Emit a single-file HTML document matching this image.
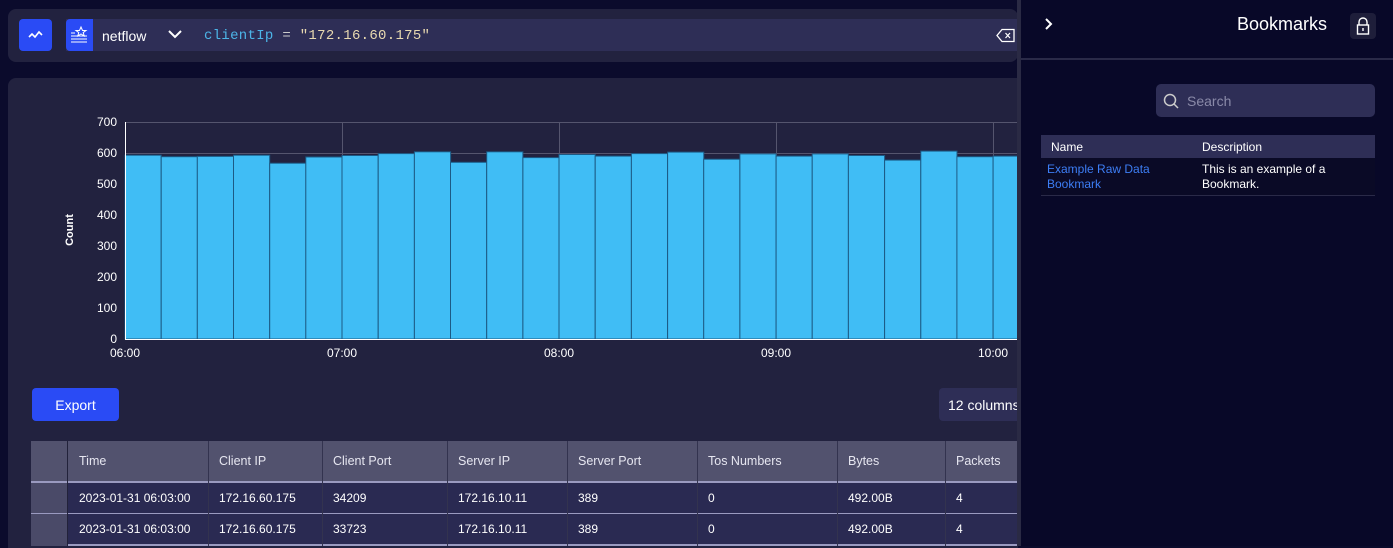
<!DOCTYPE html>
<html><head><meta charset="utf-8"><style>
*{margin:0;padding:0;box-sizing:border-box}
body{width:1393px;height:546px;background:#0b0b2c;font-family:"Liberation Sans",sans-serif;color:#fff;position:relative;overflow:hidden}
.abs{position:absolute}
.th,.td{position:absolute;font-size:12px;display:flex;align-items:center;padding-left:11px}
.th{color:#e6e6f0;font-size:12.5px}
</style></head><body>
<!-- top bar -->
<div class="abs" style="left:8px;top:9px;width:1010px;height:53px;background:#22223f;border-radius:8px"></div>
<div class="abs" style="left:19px;top:19px;width:33px;height:32px;background:#2a4bf5;border-radius:4px">
<svg width="33" height="32"><polyline points="10,18 13,15 16,18 20,13 23,16" fill="none" stroke="#fff" stroke-width="1.6"/></svg></div>
<div class="abs" style="left:66px;top:19px;width:952px;height:32px;background:#2e2e56"></div>
<div class="abs" style="left:66px;top:19px;width:27px;height:32px;background:#2a4bf5;border-radius:4px 0 0 4px">
<svg width="27" height="32"><polygon points="15,8 16.5,11.5 20,11.5 17.2,13.6 18.3,17 15,15 11.7,17 12.8,13.6 10,11.5 13.5,11.5" fill="none" stroke="#fff" stroke-width="1"/><line x1="5" y1="14" x2="9" y2="14" stroke="#fff"/><line x1="5" y1="17" x2="21" y2="17" stroke="#fff"/><line x1="5" y1="20" x2="21" y2="20" stroke="#fff"/><line x1="5" y1="23" x2="21" y2="23" stroke="#fff"/></svg></div>
<div class="abs" style="left:102px;top:28px;font-size:14px">netflow</div>
<svg class="abs" style="left:166px;top:28px" width="18" height="14"><polyline points="3,3 9,9 15,3" fill="none" stroke="#fff" stroke-width="2"/></svg>
<div class="abs" style="left:204px;top:28px;font-size:14px;font-family:'Liberation Mono',monospace;letter-spacing:0.3px"><span style="color:#4cb5e8">clientIp</span> <span style="color:#ccc">=</span> <span style="color:#e8d9b0">"172.16.60.175"</span></div>
<svg class="abs" style="left:996px;top:28px" width="20" height="15"><path d="M6 1.5 H18 V13.5 H6 L1 7.5 Z" fill="none" stroke="#fff" stroke-width="1.3"/><path d="M9.5 5 L14 10 M14 5 L9.5 10" stroke="#fff" stroke-width="1.2"/></svg>
<!-- chart panel -->
<div class="abs" style="left:8px;top:78px;width:1010px;height:470px;background:#22223f;border-radius:8px 0 0 0"></div>
<svg class="abs" style="left:0;top:0" width="1020" height="370" font-family="Liberation Sans, sans-serif">
<g stroke="#55556e" stroke-width="1">
<line x1="125" y1="122.5" x2="1020" y2="122.5"/><line x1="125" y1="153.5" x2="1020" y2="153.5"/>
<line x1="342.5" y1="122" x2="342.5" y2="339"/><line x1="559.5" y1="122" x2="559.5" y2="339"/><line x1="776.5" y1="122" x2="776.5" y2="339"/><line x1="993.5" y1="122" x2="993.5" y2="339"/>
</g>
<g fill="#40bdf5" stroke="#1c5a85" stroke-width="1">
<rect x="125" y="155.2" width="36.2" height="183.8"/><rect x="161.2" y="156.7" width="36.2" height="182.3"/><rect x="197.3" y="156.4" width="36.2" height="182.6"/><rect x="233.5" y="155.2" width="36.2" height="183.8"/><rect x="269.7" y="163.2" width="36.2" height="175.8"/><rect x="305.8" y="157" width="36.2" height="182"/><rect x="342" y="155.5" width="36.2" height="183.5"/><rect x="378.2" y="153.6" width="36.2" height="185.4"/><rect x="414.4" y="151.8" width="36.2" height="187.2"/><rect x="450.5" y="162.3" width="36.2" height="176.7"/><rect x="486.7" y="151.8" width="36.2" height="187.2"/><rect x="522.9" y="157.6" width="36.2" height="181.4"/><rect x="559" y="154.5" width="36.2" height="184.5"/><rect x="595.2" y="156.1" width="36.2" height="182.9"/><rect x="631.4" y="153.6" width="36.2" height="185.4"/><rect x="667.6" y="152.1" width="36.2" height="186.9"/><rect x="703.7" y="159.2" width="36.2" height="179.8"/><rect x="739.9" y="153.9" width="36.2" height="185.1"/><rect x="776.1" y="156.1" width="36.2" height="182.9"/><rect x="812.2" y="153.9" width="36.2" height="185.1"/><rect x="848.4" y="155.5" width="36.2" height="183.5"/><rect x="884.6" y="160.1" width="36.2" height="178.9"/><rect x="920.8" y="151.1" width="36.2" height="187.9"/><rect x="956.9" y="156.7" width="36.2" height="182.3"/><rect x="993.1" y="156.1" width="36.2" height="182.9"/>
</g>
<line x1="125.5" y1="122" x2="125.5" y2="339" stroke="#fff"/>
<line x1="125" y1="339.5" x2="1020" y2="339.5" stroke="#fff"/>
<g fill="#fff" font-size="12" text-anchor="end">
<text x="117" y="126">700</text><text x="117" y="157">600</text><text x="117" y="188">500</text><text x="117" y="219">400</text><text x="117" y="250">300</text><text x="117" y="281">200</text><text x="117" y="312">100</text><text x="117" y="343">0</text></g>
<g fill="#fff" font-size="12" text-anchor="middle">
<text x="125" y="357">06:00</text><text x="342" y="357">07:00</text><text x="559" y="357">08:00</text><text x="776" y="357">09:00</text><text x="993" y="357">10:00</text></g>
<text x="73" y="230" fill="#fff" font-size="11" font-weight="bold" text-anchor="middle" transform="rotate(-90 73 230)">Count</text>
</svg>
<div class="abs" style="left:32px;top:388px;width:87px;height:33px;background:#2a4bf5;border-radius:4px;font-size:14px;display:flex;align-items:center;justify-content:center">Export</div>
<div class="abs" style="left:939px;top:388px;width:90px;height:33px;background:#2e2e56;border-radius:4px;font-size:14px;padding:9px 0 0 9px">12 columns</div>
<!-- table -->
<div class="abs" style="left:31px;top:441px;width:989px;height:40px;background:#52526e"></div>
<div class="abs" style="left:31px;top:481px;width:989px;height:2px;background:#9a9ac0"></div>
<div class="abs" style="left:31px;top:483px;width:989px;height:30px;background:#2a2a52"></div>
<div class="abs" style="left:31px;top:513px;width:989px;height:1px;background:#9a9ac0"></div>
<div class="abs" style="left:31px;top:514px;width:989px;height:30px;background:#2a2a52"></div>
<div class="abs" style="left:31px;top:544px;width:989px;height:2px;background:#9a9ac0"></div>
<div class="abs" style="left:31px;top:483px;width:37px;height:63px;background:#4a4a68"></div>
<div class="abs" style="left:31px;top:513px;width:37px;height:1px;background:#9a9ac0"></div>
<div class="abs" style="left:67px;top:441px;width:1px;height:105px;background:#22223a"></div>
<div class="abs" style="left:208px;top:441px;width:1px;height:105px;background:#33334f"></div>
<div class="abs" style="left:322px;top:441px;width:1px;height:105px;background:#33334f"></div>
<div class="abs" style="left:447px;top:441px;width:1px;height:105px;background:#33334f"></div>
<div class="abs" style="left:567px;top:441px;width:1px;height:105px;background:#33334f"></div>
<div class="abs" style="left:697px;top:441px;width:1px;height:105px;background:#33334f"></div>
<div class="abs" style="left:837px;top:441px;width:1px;height:105px;background:#33334f"></div>
<div class="abs" style="left:945px;top:441px;width:1px;height:105px;background:#33334f"></div>
<div class="th" style="left:68px;top:441px;height:40px">Time</div>
<div class="th" style="left:208px;top:441px;height:40px">Client IP</div>
<div class="th" style="left:322px;top:441px;height:40px">Client Port</div>
<div class="th" style="left:447px;top:441px;height:40px">Server IP</div>
<div class="th" style="left:567px;top:441px;height:40px">Server Port</div>
<div class="th" style="left:697px;top:441px;height:40px">Tos Numbers</div>
<div class="th" style="left:837px;top:441px;height:40px">Bytes</div>
<div class="th" style="left:945px;top:441px;height:40px">Packets</div>
<div class="td" style="left:68px;top:483px;height:30px">2023-01-31 06:03:00</div>
<div class="td" style="left:208px;top:483px;height:30px">172.16.60.175</div>
<div class="td" style="left:322px;top:483px;height:30px">34209</div>
<div class="td" style="left:447px;top:483px;height:30px">172.16.10.11</div>
<div class="td" style="left:567px;top:483px;height:30px">389</div>
<div class="td" style="left:697px;top:483px;height:30px">0</div>
<div class="td" style="left:837px;top:483px;height:30px">492.00B</div>
<div class="td" style="left:945px;top:483px;height:30px">4</div>
<div class="td" style="left:68px;top:514px;height:30px">2023-01-31 06:03:00</div>
<div class="td" style="left:208px;top:514px;height:30px">172.16.60.175</div>
<div class="td" style="left:322px;top:514px;height:30px">33723</div>
<div class="td" style="left:447px;top:514px;height:30px">172.16.10.11</div>
<div class="td" style="left:567px;top:514px;height:30px">389</div>
<div class="td" style="left:697px;top:514px;height:30px">0</div>
<div class="td" style="left:837px;top:514px;height:30px">492.00B</div>
<div class="td" style="left:945px;top:514px;height:30px">4</div>
<!-- right panel -->
<div class="abs" style="left:1017px;top:0;width:4px;height:546px;background:#2a2a44"></div>
<div class="abs" style="left:1021px;top:0;width:372px;height:546px;background:#080828"></div>
<svg class="abs" style="left:1043px;top:17px" width="12" height="14"><polyline points="3,2 8,7 3,12" fill="none" stroke="#fff" stroke-width="2"/></svg>
<div class="abs" style="left:1237px;top:14px;font-size:18px">Bookmarks</div>
<div class="abs" style="left:1350px;top:13px;width:26px;height:26px;background:#1e1e3a;border-radius:4px">
<svg width="26" height="26"><path d="M9 12 V9 a4 4 0 0 1 8 0 V12" fill="none" stroke="#fff" stroke-width="1.4"/><rect x="7.5" y="12" width="11" height="9" fill="none" stroke="#fff" stroke-width="1.4"/><line x1="13" y1="15" x2="13" y2="18" stroke="#fff" stroke-width="1.4"/></svg></div>
<div class="abs" style="left:1021px;top:58px;width:372px;height:2px;background:#2a2a48"></div>
<div class="abs" style="left:1156px;top:84px;width:219px;height:33px;background:#2e2e56;border-radius:5px">
<svg class="abs" style="left:6px;top:8px" width="20" height="18"><circle cx="8" cy="8" r="5.5" fill="none" stroke="#ccc" stroke-width="1.5"/><line x1="12" y1="12" x2="16" y2="16" stroke="#ccc" stroke-width="1.5"/></svg>
<div class="abs" style="left:31px;top:9px;font-size:14px;color:#8a8aa8">Search</div></div>
<div class="abs" style="left:1041px;top:135px;width:334px;height:23px;background:#2e2e56"></div>
<div class="abs" style="left:1051px;top:140px;font-size:12px">Name</div>
<div class="abs" style="left:1202px;top:140px;font-size:12px">Description</div>
<div class="abs" style="left:1041px;top:158px;width:334px;height:38px;background:#0a0a26;border-bottom:1px solid #2a2a48"></div>
<div class="abs" style="left:1047px;top:162px;font-size:12px;color:#3d7ef5;line-height:15px">Example Raw Data<br>Bookmark</div>
<div class="abs" style="left:1202px;top:162px;font-size:12px;line-height:15px">This is an example of a<br>Bookmark.</div>
</body></html>
